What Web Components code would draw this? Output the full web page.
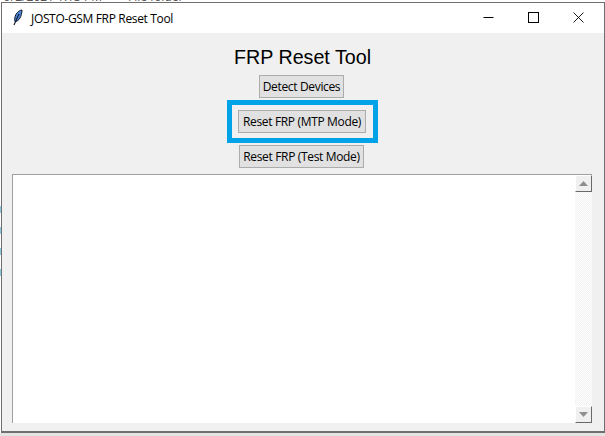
<!DOCTYPE html>
<html>
<head>
<meta charset="utf-8">
<title>JOSTO-GSM FRP Reset Tool</title>
<style>
  html, body { margin: 0; padding: 0; height: 100%; background: #fff; overflow: hidden; }
  body { font-family: "Open Sans", "Liberation Sans", sans-serif; }
</style>
</head>
<body>
<tk-window title="JOSTO-GSM FRP Reset Tool">
  <h-title>FRP Reset Tool</h-title>
  <tk-button>Detect Devices</tk-button>
  <tk-button highlight>Reset FRP (MTP Mode)</tk-button>
  <tk-button>Reset FRP (Test Mode)</tk-button>
  <log-box></log-box>
</tk-window>

<script>
class TkWindow extends HTMLElement {
  constructor() {
    super();
    this.shadowDOM = this.attachShadow({ mode: 'open' });
  }

  connectedCallback() {
    this.shadowDOM.innerHTML = `
    <style>
      :host {
        display: block;
        position: relative;
        box-sizing: border-box;
        width: 605px;
        height: 436px;
        padding: 2px 0 0 1px;
        overflow: hidden;
        background: linear-gradient(#fff 433px, #e4e4e4 433px);
      }
      /* desktop behind the window, only the tops of its texts stick out */
      .desk {
        position: absolute;
        left: 0;
        top: -10px;
        font: 12px/14px "Open Sans", "Liberation Sans", sans-serif;
        color: #555;
        white-space: nowrap;
      }
      .desk.date { left: 4px; }
      .desk.kind { left: 128px; }
      .edge {
        position: absolute;
        left: 0;
        top: 200px;
        width: 1px;
        height: 90px;
        background: repeating-linear-gradient(#fff 0 6px, #8ec8e0 6px 13px, #fff 13px 21px);
      }
      .frame {
        position: relative;
        box-sizing: border-box;
        height: 431px;
        display: flex;
        flex-direction: column;
        border: 1px solid #6f6f6f;
        border-bottom-width: 2px;
        background: #f0f0f0;
      }
      .bar {
        flex: none;
        height: 30px;
        display: flex;
        align-items: center;
        padding-right: 3px;
        background: #fff;
      }
      .feather { margin: 0 8px 2px 10px; }
      .name {
        flex: 1;
        font: 12px "Open Sans", "Liberation Sans", sans-serif;
        letter-spacing: -.34px;
        color: #000;
      }
      .ctl { width: 45px; height: 28px; padding-bottom: 2px; display: flex; align-items: center; justify-content: center; }
      .body {
        flex: 1;
        min-height: 0;
        display: flex;
        flex-direction: column;
        align-items: center;
        padding-right: 3px;
      }
    </style>
    <span class="desk date">9/2/2021 1:13 PM</span>
    <span class="desk kind">File folder</span>
    <div class="edge"></div>
    <div class="frame">
      <div class="bar">
        <svg class="feather" width="11" height="17" viewBox="0 0 11 17">
          <path d="M10 1C6.500 1.500 3.500 4.500 2.800 9c-.3 1.700-.1 3.200.4 3.800C7 12 9.800 7.500 10 1z" fill="#4a86d8" stroke="#10182a" stroke-width="1"/>
          <path d="M7 5 2 16" stroke="#10182a" stroke-width="1.100" fill="none"/>
        </svg>
        <span class="name">${this.getAttribute('title')}</span>
        <div class="ctl"><svg width="11" height="11"><path d="M.5 5.500h10" stroke="#000"/></svg></div>
        <div class="ctl"><svg width="11" height="11"><rect x=".5" y=".5" width="10" height="10" fill="none" stroke="#000"/></svg></div>
        <div class="ctl"><svg width="11" height="11"><path d="M.5.500l10 10M10.500.500l-10 10" stroke="#000" stroke-width=".9"/></svg></div>
      </div>
      <div class="body"><slot></slot></div>
    </div>`;
  }
}

class HTitle extends HTMLElement {
  constructor() {
    super();
    this.attachShadow({ mode: 'open' }).innerHTML = `
    <style>
      :host {
        display: block;
        margin: 11px 0 2px 2px;
        font: 19.700px/27px "Liberation Sans", Arial, sans-serif;
        color: #000;
      }
    </style>
    <slot></slot>`;
  }
}

class TkButton extends HTMLElement {
  constructor() {
    super();
    this.attachShadow({ mode: 'open' }).innerHTML = `
    <style>
      :host {
        display: block;
        margin-top: 2px;
      }
      :host([highlight]) { margin-left: 2px; }
      .hl { display: contents; }
      :host([highlight]) .hl {
        display: block;
        padding: 5px 7px 5px 6px;
        border: 5px solid #00a3e8;
      }
      button {
        display: block;
        box-sizing: border-box;
        height: 23px;
        padding: 0 3px;
        border: 1px solid #acacac;
        background: #e1e1e1;
        color: #000;
        font: 12px "Open Sans", "Liberation Sans", sans-serif;
        letter-spacing: -.34px;
        white-space: nowrap;
      }
      :host([highlight]) button { padding: 0 4px; }
    </style>
    <div class="hl"><button><slot></slot></button></div>`;
  }
}

class LogBox extends HTMLElement {
  constructor() {
    super();
    this.attachShadow({ mode: 'open' }).innerHTML = `
    <style>
      :host {
        display: flex;
        box-sizing: border-box;
        width: 580px;
        height: 249px;
        margin: 6px 0 0 10px;
        align-self: flex-start;
        background: #fff;
        border-top: 1px solid #a0a0a0;
        border-left: 1px solid #a0a0a0;
      }
      .text { flex: 1; }
      .track {
        flex: none;
        width: 17px;
        display: flex;
        flex-direction: column;
        justify-content: space-between;
        background-color: #fff;
        background-image: conic-gradient(#f0f0f0 25%, #fff 0 50%, #f0f0f0 0 75%, #fff 0);
        background-size: 2px 2px;
      }
      .arrow {
        box-sizing: border-box;
        height: 17px;
        display: flex;
        align-items: center;
        justify-content: center;
        background: #f0f0f0;
        border: 1px solid;
        border-color: #fff #696969 #696969 #fff;
      }
    </style>
    <div class="text"></div>
    <div class="track">
      <div class="arrow"><svg width="9" height="5"><path d="M4.500 0 9 5H0z" fill="#8f8f8f"/></svg></div>
      <div class="arrow"><svg width="9" height="5"><path d="M0 0h9L4.500 5z" fill="#8f8f8f"/></svg></div>
    </div>`;
  }
}

customElements.define('tk-window', TkWindow);
customElements.define('h-title', HTitle);
customElements.define('tk-button', TkButton);
customElements.define('log-box', LogBox);
</script>
</body>
</html>
